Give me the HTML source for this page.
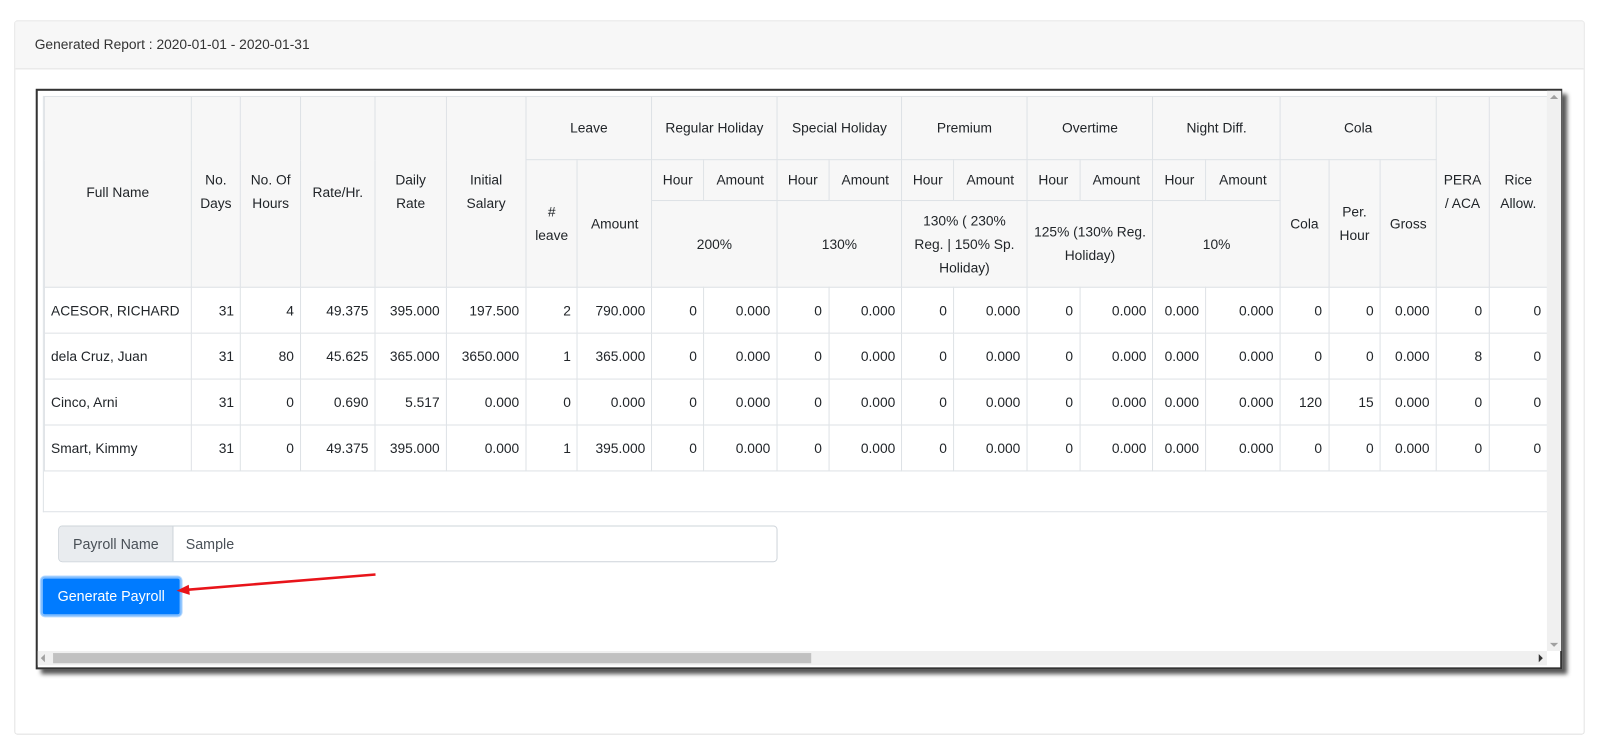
<!DOCTYPE html>
<html><head><meta charset="utf-8"><style>
*{box-sizing:border-box;margin:0;padding:0}
html,body{width:1600px;height:685px;overflow:hidden;background:#fff;font-family:"Liberation Sans",Arial,sans-serif;color:#212529}
#w{position:absolute;left:0;top:0;width:1568px;height:672px;transform:scale(1.0204);transform-origin:0 0}
.card{position:absolute;left:14px;top:20px;width:1539px;height:700px;border:1px solid #e3e3e3;border-radius:3px}
.ch{height:47px;background:#f7f7f7;border-bottom:1px solid #e3e3e3;padding:15px 0 0 19px;font-size:13.5px;color:#333}
.frame{position:absolute;left:35px;top:87px;width:1496px;height:569px;border:2px solid #333;background:#fff;box-shadow:5px 5px 4px #555}
.clip{position:absolute;left:5px;top:5px;width:1475px;height:408px;overflow:hidden;border:1px solid #dee2e6;border-top:none}
table{border-collapse:collapse;table-layout:fixed;width:1520px;font-size:13.5px;line-height:23px}
th,td{border:1px solid #dee2e6;padding:0 6px}
th{background:#f7f7f7;font-weight:normal;text-align:center;vertical-align:middle}
td{text-align:right;height:45px;white-space:nowrap}
td:first-child{text-align:left}
.vs{position:absolute;left:1479px;top:0;width:14px;height:549px;background:#f0f0f0}
.hs{position:absolute;left:0;top:549px;width:1479px;height:14px;background:#f0f0f0}
.thumb{position:absolute;left:15px;top:2px;width:743px;height:10px;background:#c1c1c1}
.ig{position:absolute;left:20px;top:426px;width:705px;height:36px;border:1px solid #ced4da;border-radius:4px;font-size:14px;overflow:hidden}
.ig .l{position:absolute;left:0;top:0;width:112px;height:34px;background:#e9ecef;border-right:1px solid #ced4da;color:#495057;text-align:center;line-height:34px}
.ig .v{position:absolute;left:124px;top:0;line-height:34px;color:#495057}
.btn{position:absolute;left:3px;top:476px;width:138px;height:39px;background:#007bff;border:2px solid #80bdff;border-radius:4px;color:#fff;font-size:14px;text-align:center;line-height:35px;box-shadow:0 0 0 1px #b8daff}
.inp{display:inline-block;width:12px;height:26px;border:1px solid #aaa;border-right:none;vertical-align:middle;font-size:13px;line-height:24px;text-align:left;padding-left:1px;color:#123}
</style></head><body><div id="w">
<div class="card"><div class="ch">Generated Report : 2020-01-01 - 2020-01-31</div></div>
<div class="frame">
<div class="clip"><table>
<colgroup><col style="width:142px"><col style="width:48px"><col style="width:58px"><col style="width:72px"><col style="width:69px"><col style="width:77px"><col style="width:50px"><col style="width:72px"><col style="width:50px"><col style="width:71px"><col style="width:50px"><col style="width:71px"><col style="width:50px"><col style="width:71px"><col style="width:51px"><col style="width:71px"><col style="width:51px"><col style="width:72px"><col style="width:47px"><col style="width:50px"><col style="width:54px"><col style="width:51px"><col style="width:57px"><col style="width:45px"></colgroup>
<tr style="height:62px"><th rowspan="3">Full Name</th><th rowspan="3">No. Days</th><th rowspan="3">No. Of Hours</th><th rowspan="3">Rate/Hr.</th><th rowspan="3">Daily Rate</th><th rowspan="3">Initial Salary</th><th colspan="2">Leave</th><th colspan="2">Regular Holiday</th><th colspan="2">Special Holiday</th><th colspan="2">Premium</th><th colspan="2">Overtime</th><th colspan="2">Night Diff.</th><th colspan="3">Cola</th><th rowspan="3">PERA / ACA</th><th rowspan="3">Rice Allow.</th><th rowspan="3" style="text-align:left">A</th></tr>
<tr style="height:40px"><th rowspan="2"># leave</th><th rowspan="2">Amount</th><th>Hour</th><th>Amount</th><th>Hour</th><th>Amount</th><th>Hour</th><th>Amount</th><th>Hour</th><th>Amount</th><th>Hour</th><th>Amount</th><th rowspan="2">Cola</th><th rowspan="2">Per. Hour</th><th rowspan="2">Gross</th></tr>
<tr style="height:85px"><th colspan="2">200%</th><th colspan="2">130%</th><th colspan="2">130% ( 230% Reg. | 150% Sp. Holiday)</th><th colspan="2">125% (130% Reg. Holiday)</th><th colspan="2">10%</th></tr>
<tr><td>ACESOR, RICHARD</td><td>31</td><td>4</td><td>49.375</td><td>395.000</td><td>197.500</td><td>2</td><td>790.000</td><td>0</td><td>0.000</td><td>0</td><td>0.000</td><td>0</td><td>0.000</td><td>0</td><td>0.000</td><td>0.000</td><td>0.000</td><td>0</td><td>0</td><td>0.000</td><td>0</td><td>0</td><td style="text-align:left;padding-left:7px"><span class="inp">0</span></td></tr>
<tr><td>dela Cruz, Juan</td><td>31</td><td>80</td><td>45.625</td><td>365.000</td><td>3650.000</td><td>1</td><td>365.000</td><td>0</td><td>0.000</td><td>0</td><td>0.000</td><td>0</td><td>0.000</td><td>0</td><td>0.000</td><td>0.000</td><td>0.000</td><td>0</td><td>0</td><td>0.000</td><td>8</td><td>0</td><td style="text-align:left;padding-left:7px"><span class="inp">0</span></td></tr>
<tr><td>Cinco, Arni</td><td>31</td><td>0</td><td>0.690</td><td>5.517</td><td>0.000</td><td>0</td><td>0.000</td><td>0</td><td>0.000</td><td>0</td><td>0.000</td><td>0</td><td>0.000</td><td>0</td><td>0.000</td><td>0.000</td><td>0.000</td><td>120</td><td>15</td><td>0.000</td><td>0</td><td>0</td><td style="text-align:left;padding-left:7px"><span class="inp">1</span></td></tr>
<tr><td>Smart, Kimmy</td><td>31</td><td>0</td><td>49.375</td><td>395.000</td><td>0.000</td><td>1</td><td>395.000</td><td>0</td><td>0.000</td><td>0</td><td>0.000</td><td>0</td><td>0.000</td><td>0</td><td>0.000</td><td>0.000</td><td>0.000</td><td>0</td><td>0</td><td>0.000</td><td>0</td><td>0</td><td style="text-align:left;padding-left:7px"><span class="inp">0</span></td></tr>
</table></div>
<div class="ig"><div class="l">Payroll Name</div><div class="v">Sample</div></div>
<div class="btn">Generate Payroll</div>
<svg style="position:absolute;left:0;top:0" width="1490" height="560"><line x1="331" y1="474" x2="146" y2="489" stroke="#e8141a" stroke-width="2.5"/><polygon points="136,490 148,484 149,494" fill="#e8141a"/></svg>
<div class="vs"><div style="position:absolute;left:3px;top:4px;border:4px solid transparent;border-bottom:4px solid #a0a0a0;border-top:none"></div><div style="position:absolute;left:3px;bottom:4px;border:4px solid transparent;border-top:4px solid #a0a0a0;border-bottom:none"></div></div>
<div class="hs"><div class="thumb"></div><div style="position:absolute;left:3px;top:3px;border:4px solid transparent;border-right:4px solid #a0a0a0;border-left:none"></div><div style="position:absolute;right:4px;top:3px;border:4px solid transparent;border-left:4px solid #333;border-right:none"></div></div>
</div>
</div></body></html>
